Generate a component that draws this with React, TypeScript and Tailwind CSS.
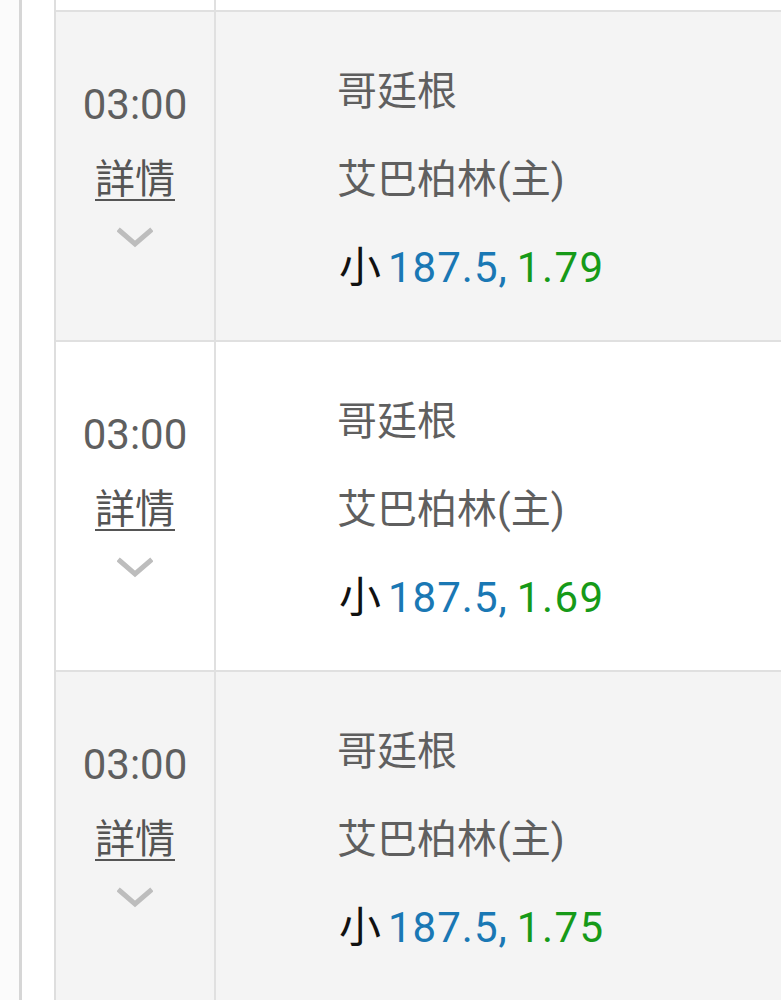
const rows = [
  { time: "03:00", home: "哥廷根", away: "艾巴柏林(主)", line: "187.5", odds: "1.79", shaded: true },
  { time: "03:00", home: "哥廷根", away: "艾巴柏林(主)", line: "187.5", odds: "1.69", shaded: false },
  { time: "03:00", home: "哥廷根", away: "艾巴柏林(主)", line: "187.5", odds: "1.75", shaded: true },
];

function Chevron() {
  return (
    <svg width="36" height="22" viewBox="0 0 36 22" fill="none">
      <path d="M3 4 L18 17 L33 4" stroke="#bdbdbd" strokeWidth="5" strokeLinecap="square" />
    </svg>
  );
}

export default function App() {
  return (
    <div
      className="flex w-[781px] h-[1000px] overflow-hidden bg-white"
      style={{ fontFamily: "Roboto, 'Noto Sans CJK TC', sans-serif" }}
    >
      <div className="w-[19px] bg-[#fbfbfb]" />
      <div className="w-[3px] bg-[#d6d6d6]" />
      <div className="w-[32px] bg-white" />
      <div className="flex-1 border-l-2 border-[#dedede]">
        {/* tail of previous row */}
        <div className="flex h-[10px] bg-white">
          <div className="w-[160px] border-r-2 border-[#e0e0e0]" />
          <div className="flex-1" />
        </div>
        {rows.map((r, i) => (
          <div
            key={i}
            className={`flex h-[330px] border-t-2 border-[#e0e0e0] ${r.shaded ? "bg-[#f4f4f4]" : "bg-white"}`}
          >
            <div className="w-[160px] border-r-2 border-[#e0e0e0] flex flex-col items-center pt-[68px]">
              <div className="text-[42px] leading-[50px] text-[#5f5f5f]">{r.time}</div>
              <div className="mt-[25px] text-[40px] leading-[50px] text-[#555] underline decoration-2 underline-offset-[6px]">
                詳情
              </div>
              <div className="mt-[22px]">
                <Chevron />
              </div>
            </div>
            <div className="flex-1 pl-[121px] pt-[36px] text-[40px] leading-[88px]">
              <div className="text-[#5f5f5f]">{r.home}</div>
              <div className="text-[#5f5f5f]">{r.away}</div>
              <div className="flex items-baseline">
                <span className="text-[#111] text-[42px] ml-[2px]">小</span>
                <span className="text-[#1a78b4] text-[42px] tracking-[1px] ml-[7px]">{r.line},</span>
                <span className="text-[#169a18] text-[42px] tracking-[1.5px] ml-[9px]">{r.odds}</span>
              </div>
            </div>
          </div>
        ))}
      </div>
    </div>
  );
}
